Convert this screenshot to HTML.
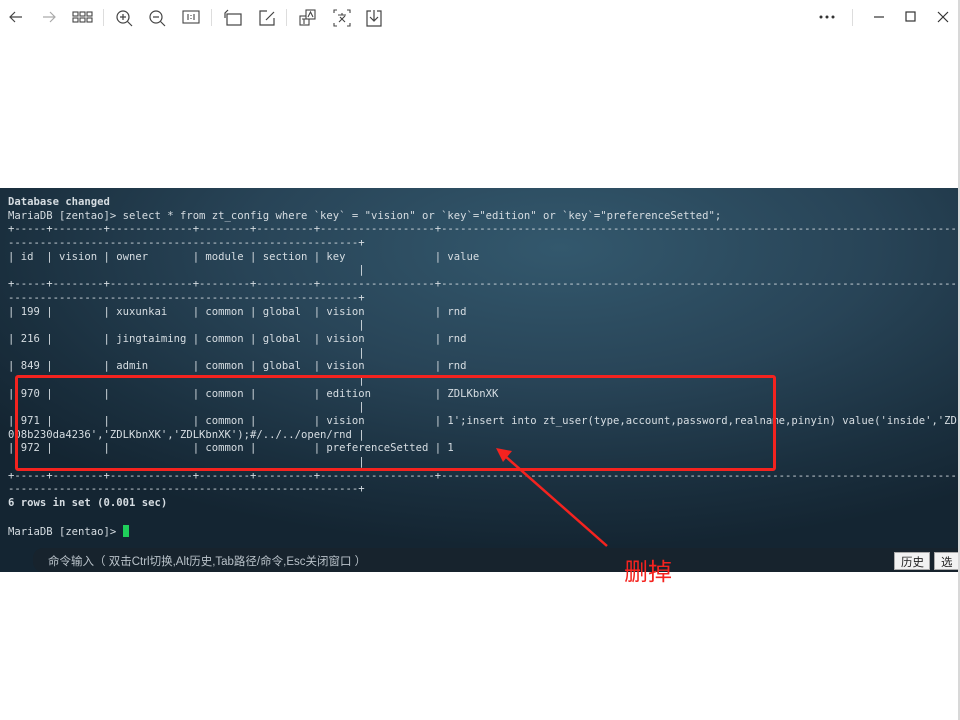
<!DOCTYPE html>
<html><head><meta charset="utf-8"><style>
*{margin:0;padding:0;box-sizing:border-box}
body{width:960px;height:720px;background:#fff;position:relative;overflow:hidden;font-family:"Liberation Sans","Noto Sans CJK SC",sans-serif}
.edge{position:absolute;right:0;top:0;width:2px;height:720px;background:#d8d8d8}
.tb{position:absolute;top:0;left:0;width:958px;height:36px}
.tb svg{position:absolute;top:9px}
.term{position:absolute;left:0;top:188px;width:958px;height:384px;overflow:hidden;
background:radial-gradient(ellipse 700px 300px at 560px 60px,#33586d 0%,#284457 45%,#1a2f3e 80%,#142532 100%)}
.lines{position:absolute;left:8px;top:8px;font-family:"DejaVu Sans Mono","Liberation Mono",monospace;font-size:10.58px;line-height:13.68px;color:#d6dde2;white-space:pre}
.b{font-weight:bold}
.cur{display:inline-block;width:6px;height:12px;background:#1fcf5a;vertical-align:-2px}
.bar{position:absolute;left:33px;top:360px;width:930px;height:24px;background:#17232d;border-radius:10px 0 0 10px;font-size:11.5px;color:#b9c2c9;padding:5px 0 0 15px}
.btn{position:absolute;top:364px;height:18px;background:#f2f2f2;border:1px solid #aaa;font-size:11.5px;color:#222;padding:1px 0 0 6px}
.box{position:absolute;left:15px;top:375px;width:761px;height:96px;border:3px solid #f4231f;border-radius:3px}
.del{position:absolute;left:624px;top:552px;color:#f4231f;font-size:24px;font-family:"Noto Sans CJK SC",sans-serif}
</style></head><body>
<div class="edge"></div>
<div class="tb">
<svg style="left:8px" width="16" height="16" viewBox="0 0 16 16" fill="none" stroke="#444" stroke-width="1.2"><path d="M14 8H2M7 3L2 8l5 5"/></svg>
<svg style="left:41px" width="16" height="16" viewBox="0 0 16 16" fill="none" stroke="#aaa" stroke-width="1.2"><path d="M2 8h12M9 3l5 5-5 5"/></svg>
<svg style="left:72px" width="22" height="16" viewBox="0 0 22 16" fill="none" stroke="#444" stroke-width="1.1"><rect x="1" y="3" width="5" height="4"/><rect x="8" y="3" width="5" height="4"/><rect x="15" y="3" width="5" height="4"/><rect x="1" y="9" width="5" height="4"/><rect x="8" y="9" width="5" height="4"/><rect x="15" y="9" width="5" height="4"/></svg>
<div style="position:absolute;left:103px;top:9px;width:1px;height:17px;background:#ddd"></div>
<svg style="left:115px" width="18" height="18" viewBox="0 0 18 18" fill="none" stroke="#444" stroke-width="1.2"><circle cx="8" cy="8" r="6"/><path d="M12.5 12.5L17 17M5 8h6M8 5v6"/></svg>
<svg style="left:148px" width="18" height="18" viewBox="0 0 18 18" fill="none" stroke="#444" stroke-width="1.2"><circle cx="8" cy="8" r="6"/><path d="M12.5 12.5L17 17M5 8h6"/></svg>
<svg style="left:182px" width="18" height="16" viewBox="0 0 18 16" fill="none" stroke="#444" stroke-width="1.1"><rect x="1" y="2" width="16" height="12"/><path d="M6 5v6M12 5v6M9 6v1M9 9v1"/></svg>
<div style="position:absolute;left:211px;top:9px;width:1px;height:17px;background:#ddd"></div>
<svg style="left:223px" width="20" height="18" viewBox="0 0 20 18" fill="none" stroke="#444" stroke-width="1.2"><rect x="4" y="5" width="14" height="11"/><path d="M2 9V4l3-3"/></svg>
<svg style="left:258px" width="18" height="18" viewBox="0 0 18 18" fill="none" stroke="#444" stroke-width="1.2"><path d="M9 2H2v14h14V9M8 11l8-8"/></svg>
<div style="position:absolute;left:286px;top:9px;width:1px;height:17px;background:#ddd"></div>
<svg style="left:299px" width="18" height="18" viewBox="0 0 18 18" fill="none" stroke="#444" stroke-width="1.1"><rect x="1" y="7" width="9" height="9"/><rect x="7" y="1" width="9" height="9" fill="#fff"/><path d="M9 8l2.5-5L14 8M3 10h5M5 10v5"/></svg>
<svg style="left:333px" width="18" height="18" viewBox="0 0 18 18" fill="none" stroke="#444" stroke-width="1.1"><path d="M1 4V1h3M14 1h3v3M17 14v3h-3M4 17H1v-3M5 6h8M9 4v2M6 13l6-6M7 8l5 5"/></svg>
<svg style="left:366px" width="16" height="18" viewBox="0 0 16 18" fill="none" stroke="#444" stroke-width="1.2"><path d="M5 2H1v15h14V2h-4M8 1v10M4 8l4 4 4-4"/></svg>
<svg style="left:819px;top:15px" width="18" height="4" viewBox="0 0 18 4" fill="#333"><circle cx="2" cy="2" r="1.5"/><circle cx="8" cy="2" r="1.5"/><circle cx="14" cy="2" r="1.5"/></svg>
<div style="position:absolute;left:852px;top:9px;width:1px;height:17px;background:#ddd"></div>
<svg style="left:872px" width="14" height="16" viewBox="0 0 14 16" stroke="#333" stroke-width="1.2"><path d="M2 8h10"/></svg>
<svg style="left:904px" width="14" height="16" viewBox="0 0 14 16" fill="none" stroke="#333" stroke-width="1.2"><rect x="2" y="3" width="9" height="9"/></svg>
<svg style="left:936px" width="14" height="16" viewBox="0 0 14 16" fill="none" stroke="#333" stroke-width="1.2"><path d="M2 3l10 10M12 3L2 13"/></svg>
</div>
<div class="term">
<div class="lines"><span class="b">Database changed</span>
MariaDB [zentao]&gt; select * from zt_config where `key` = "vision" or `key`="edition" or `key`="preferenceSetted";
+-----+--------+-------------+--------+---------+------------------+------------------------------------------------------------------------------------------------
-------------------------------------------------------+
| id  | vision | owner       | module | section | key              | value
                                                       |
+-----+--------+-------------+--------+---------+------------------+------------------------------------------------------------------------------------------------
-------------------------------------------------------+
| 199 |        | xuxunkai    | common | global  | vision           | rnd
                                                       |
| 216 |        | jingtaiming | common | global  | vision           | rnd
                                                       |
| 849 |        | admin       | common | global  | vision           | rnd
                                                       |
| 970 |        |             | common |         | edition          | ZDLKbnXK
                                                       |
| 971 |        |             | common |         | vision           | 1';insert into zt_user(type,account,password,realname,pinyin) value('inside','ZDLKbnXK','e10adc3949ba59abbe56e057f2
008b230da4236','ZDLKbnXK','ZDLKbnXK');#/../../open/rnd |
| 972 |        |             | common |         | preferenceSetted | 1
                                                       |
+-----+--------+-------------+--------+---------+------------------+------------------------------------------------------------------------------------------------
-------------------------------------------------------+
<span class="b">6 rows in set (0.001 sec)</span>

MariaDB [zentao]&gt; <span class="cur"></span></div>
<div class="bar">命令输入（ 双击Ctrl切换,Alt历史,Tab路径/命令,Esc关闭窗口 ）</div>
<div class="btn" style="left:894px;width:36px">历史</div>
<div class="btn" style="left:934px;width:30px">选项</div>
</div>
<div class="box"></div>
<svg style="position:absolute;left:0;top:0" width="960" height="720"><path d="M607 546L505 456" stroke="#f4231f" stroke-width="2.5"/><path d="M496 448L512 451L503 462Z" fill="#f4231f"/></svg>
<div class="del">删掉</div>
</body></html>
